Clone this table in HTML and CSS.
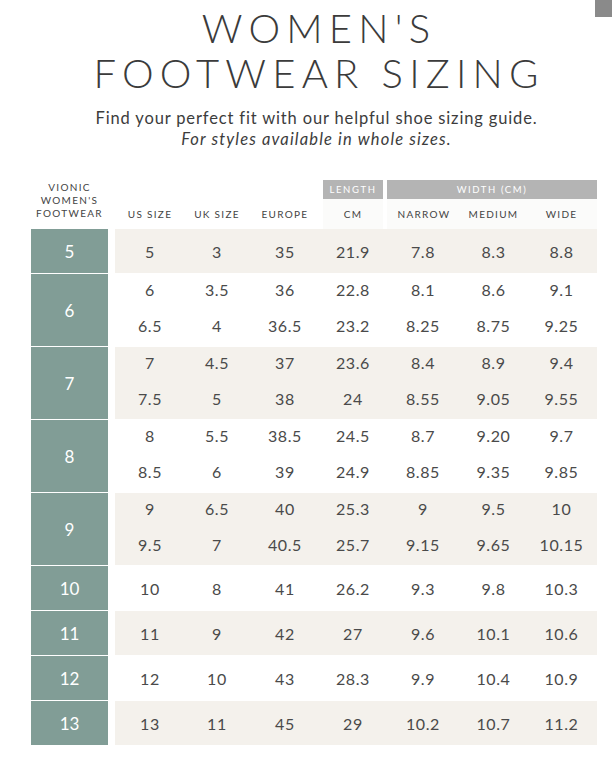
FILE: index.html
```html
<!DOCTYPE html>
<html lang="en">
<head>
<meta charset="utf-8">
<title>Women's Footwear Sizing</title>
<link rel="stylesheet" href="styles.css">
</head>
<body>
<div class="corner"></div>
<header class="intro">
  <h1 class="title">WOMEN'S<br>FOOTWEAR SIZING</h1>
  <p class="lead">Find your perfect fit with our helpful shoe sizing guide.</p>
  <p class="note">For styles available in whole sizes.</p>
</header>

<section class="chart">
  <div class="head">
    <div class="h-brand">VIONIC<br>WOMEN'S<br>FOOTWEAR</div>
    <div class="h-group h-length">LENGTH</div>
    <div class="h-group h-width">WIDTH (CM)</div>
    <div class="h-label h-us">US SIZE</div>
    <div class="h-label h-uk">UK SIZE</div>
    <div class="h-label h-eu">EUROPE</div>
    <div class="h-label h-cm shade">CM</div>
    <div class="h-label h-nar shade">NARROW</div>
    <div class="h-label h-med shade">MEDIUM</div>
    <div class="h-label h-wide shade">WIDE</div>
  </div>

  <div class="group single tint">
    <div class="size">5</div>
    <div class="data">
      <div class="line"><span>5</span><span>3</span><span>35</span><span>21.9</span><span>7.8</span><span>8.3</span><span>8.8</span></div>
    </div>
  </div>
  <div class="group double">
    <div class="size">6</div>
    <div class="data">
      <div class="line"><span>6</span><span>3.5</span><span>36</span><span>22.8</span><span>8.1</span><span>8.6</span><span>9.1</span></div>
      <div class="line"><span>6.5</span><span>4</span><span>36.5</span><span>23.2</span><span>8.25</span><span>8.75</span><span>9.25</span></div>
    </div>
  </div>
  <div class="group double tint">
    <div class="size">7</div>
    <div class="data">
      <div class="line"><span>7</span><span>4.5</span><span>37</span><span>23.6</span><span>8.4</span><span>8.9</span><span>9.4</span></div>
      <div class="line"><span>7.5</span><span>5</span><span>38</span><span>24</span><span>8.55</span><span>9.05</span><span>9.55</span></div>
    </div>
  </div>
  <div class="group double">
    <div class="size">8</div>
    <div class="data">
      <div class="line"><span>8</span><span>5.5</span><span>38.5</span><span>24.5</span><span>8.7</span><span>9.20</span><span>9.7</span></div>
      <div class="line"><span>8.5</span><span>6</span><span>39</span><span>24.9</span><span>8.85</span><span>9.35</span><span>9.85</span></div>
    </div>
  </div>
  <div class="group double tint">
    <div class="size">9</div>
    <div class="data">
      <div class="line"><span>9</span><span>6.5</span><span>40</span><span>25.3</span><span>9</span><span>9.5</span><span>10</span></div>
      <div class="line"><span>9.5</span><span>7</span><span>40.5</span><span>25.7</span><span>9.15</span><span>9.65</span><span>10.15</span></div>
    </div>
  </div>
  <div class="group single">
    <div class="size">10</div>
    <div class="data">
      <div class="line"><span>10</span><span>8</span><span>41</span><span>26.2</span><span>9.3</span><span>9.8</span><span>10.3</span></div>
    </div>
  </div>
  <div class="group single tint">
    <div class="size">11</div>
    <div class="data">
      <div class="line"><span>11</span><span>9</span><span>42</span><span>27</span><span>9.6</span><span>10.1</span><span>10.6</span></div>
    </div>
  </div>
  <div class="group single">
    <div class="size">12</div>
    <div class="data">
      <div class="line"><span>12</span><span>10</span><span>43</span><span>28.3</span><span>9.9</span><span>10.4</span><span>10.9</span></div>
    </div>
  </div>
  <div class="group single tint">
    <div class="size">13</div>
    <div class="data">
      <div class="line"><span>13</span><span>11</span><span>45</span><span>29</span><span>10.2</span><span>10.7</span><span>11.2</span></div>
    </div>
  </div>
</section>
</body>
</html>
```

FILE: styles.css
```css
html, body {
  margin: 0;
  padding: 0;
  background: #ffffff;
}
body {
  width: 612px;
  height: 760px;
  overflow: hidden;
  position: relative;
  font-family: Lato, "Open Sans", sans-serif;
  color: #444444;
}
.corner {
  position: absolute;
  top: 0;
  right: 0;
  width: 17px;
  height: 17px;
  background: #8a8a8a;
}
.intro {
  text-align: center;
  padding: 6px 0 0 20px;
}
.title {
  margin: 0;
  padding-left: 6px;
  font-family: Lato, sans-serif;
  font-weight: 300;
  font-size: 40px;
  line-height: 45px;
  letter-spacing: 6.2px;
  color: #3b3b3b;
}
.lead {
  margin: 12px 0 0;
  padding-left: 1px;
  font-size: 16.5px;
  line-height: 21px;
  letter-spacing: 0.85px;
  color: #3c3c3c;
}
.note {
  margin: 0;
  padding-left: 1px;
  font-size: 16.5px;
  line-height: 21px;
  letter-spacing: 1.15px;
  font-style: italic;
  color: #3c3c3c;
}

.chart {
  margin: 30px 0 0 31px;
  width: 566px;
}
.head {
  display: grid;
  grid-template-columns: 77px 7px 70px 64px 72px 64px 76px 65px 71px;
  grid-template-rows: 19px 30px;
  font-size: 10px;
  letter-spacing: 1.3px;
  color: #444444;
}
.h-brand {
  grid-column: 1;
  grid-row: 1 / 3;
  align-self: end;
  text-align: center;
  line-height: 13px;
  padding-bottom: 9px;
}
.h-group {
  grid-row: 1;
  background: #b4b4b4;
  color: #ffffff;
  font-size: 9.5px;
  letter-spacing: 1.6px;
  display: flex;
  align-items: center;
  justify-content: center;
}
.h-length {
  grid-column: 6;
  margin: 0 2px;
}
.h-width {
  grid-column: 7 / 10;
  margin-left: 2px;
}
.h-label {
  grid-row: 2;
  display: flex;
  align-items: center;
  justify-content: center;
}
.shade { background: #fbfbfa; }
.h-us { grid-column: 3; }
.h-uk { grid-column: 4; }
.h-eu { grid-column: 5; }
.h-cm { grid-column: 6; margin: 0 2px; }
.h-nar { grid-column: 7; margin-left: 2px; }
.h-med { grid-column: 8; }
.h-wide { grid-column: 9; }

.group {
  display: flex;
  gap: 7px;
  margin-bottom: 1px;
}
.group.single { height: 44px; }
.group.double { height: 72px; }
.size {
  width: 77px;
  flex: none;
  background: #819d96;
  color: #ffffff;
  font-size: 17px;
  display: flex;
  align-items: center;
  justify-content: center;
}
.data {
  flex: 1;
  display: flex;
  flex-direction: column;
}
.tint .data { background: #f4f1ec; }
.line {
  flex: 1;
  display: grid;
  grid-template-columns: 70px 64px 72px 64px 76px 65px 71px;
  align-items: center;
  font-size: 16px;
  letter-spacing: 0.6px;
  color: #4a4a4a;
}
.double .line {
  flex: none;
  height: 30px;
  padding-bottom: 6px;
}
.line span { text-align: center; }
```
